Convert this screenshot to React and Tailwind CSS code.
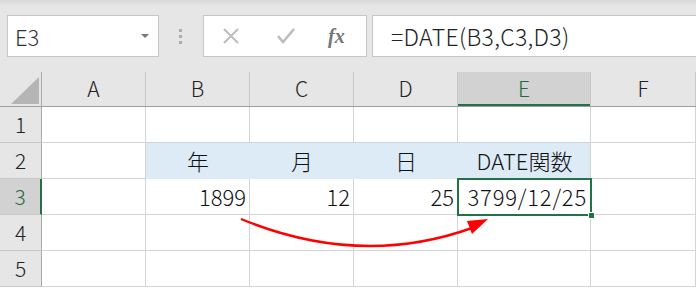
import React from 'react';

const COLS = ['A', 'B', 'C', 'D', 'E', 'F'];
const WIDTHS = ['w-[104px]', 'w-[104px]', 'w-[104px]', 'w-[104px]', 'w-[133px]', 'w-[105px]'];

// row data: [text, align, blue]
const ROWS = {
  1: {},
  2: { B: ['年', 'center', true], C: ['月', 'center', true], D: ['日', 'center', true], E: ['DATE関数', 'center', true] },
  3: { B: ['1899', 'right'], C: ['12', 'right'], D: ['25', 'right'], E: ['3799/12/25', 'right'] },
  4: {},
  5: {},
};

function Toolbar() {
  return (
    <div className="relative h-[72px] bg-[#e6e6e6]">
      <div className="h-[5px] bg-gradient-to-b from-[#d9d9d9] to-[#e4e4e4]" />
      <div className="flex items-start pt-[10px]">
        {/* name box */}
        <div className="ml-[7px] flex h-[42px] w-[152px] items-center justify-between border border-[#c6c6c6] bg-white pl-[7px] pr-[9px]">
          <span className="text-[22px] font-light text-[#333]">E3</span>
          <span className="h-0 w-0 border-x-[4px] border-t-[4px] border-x-transparent border-t-[#777]" />
        </div>
        {/* grip dots */}
        <div className="ml-[20px] flex h-[42px] flex-col justify-center gap-[3px]">
          <span className="h-[3px] w-[3px] bg-[#adadad]" />
          <span className="h-[3px] w-[3px] bg-[#adadad]" />
          <span className="h-[3px] w-[3px] bg-[#adadad]" />
        </div>
        {/* cancel / enter / fx */}
        <div className="ml-[21px] flex h-[42px] w-[164px] items-center border border-[#c6c6c6] bg-white">
          <svg className="ml-[18px]" width="18" height="18" viewBox="0 0 18 18">
            <path d="M2 2 L16 16 M16 2 L2 16" stroke="#bdbdbd" strokeWidth="2" fill="none" />
          </svg>
          <svg className="ml-[36px]" width="20" height="18" viewBox="0 0 20 18">
            <path d="M2 9 L7 15 L18 2" stroke="#bdbdbd" strokeWidth="2.6" fill="none" />
          </svg>
          <span className="ml-[32px] text-[20px] font-bold italic text-[#767676]" style={{ fontFamily: '"Liberation Serif", serif' }}>fx</span>
        </div>
        {/* formula */}
        <div className="ml-[5px] flex h-[42px] flex-1 items-center border-y border-l border-[#c6c6c6] bg-white pl-[18px]">
          <span className="text-[23px] font-light tracking-[0.3px] text-[#222]">=DATE(B3,C3,D3)</span>
        </div>
      </div>
    </div>
  );
}

function Sheet() {
  return (
    <div className="relative">
      {/* column headers */}
      <div className="flex h-[35px] border-b border-[#9e9e9e] bg-[#e6e6e6]">
        <div className="relative w-[42px] border-r border-[#aaaaaa]">
          <svg className="absolute left-[11px] top-[5px]" width="28" height="27" viewBox="0 0 28 27">
            <path d="M28 0 L28 27 L0 27 Z" fill="#b5b5b5" />
          </svg>
        </div>
        {COLS.map((c, i) => (
          <div
            key={c}
            className={`${WIDTHS[i]} flex items-center justify-center border-r text-[21px] font-light ${
              c === 'E'
                ? 'border-[#c8c8c8] bg-[#d2d2d2] text-[#1e6b40] shadow-[inset_0_-2px_0_#217346]'
                : 'border-[#c8c8c8] text-[#222]'
            }`}
          >
            {c}
          </div>
        ))}
      </div>
      {/* rows */}
      {Object.keys(ROWS).map((r) => (
        <div key={r} className="flex h-[36px]">
          <div
            className={`flex w-[42px] items-center justify-center border-b border-r text-[21px] font-light ${
              r === '3'
                ? 'border-b-[#c8c8c8] border-r-[#217346] border-r-2 bg-[#d2d2d2] text-[#1e6b40]'
                : 'border-b-[#c8c8c8] border-r-[#aaaaaa] bg-[#e6e6e6] text-[#222]'
            }`}
          >
            {r}
          </div>
          {COLS.map((c, i) => {
            const cell = ROWS[r][c];
            const blue = cell && cell[2];
            return (
              <div
                key={c}
                className={`${WIDTHS[i]} flex items-center border-b border-r pl-[4px] pr-[3px] text-[22px] font-light text-[#111] ${
                  blue ? 'bg-[#ddebf7] border-b-[#ddebf7]' : 'bg-white border-b-[#d4d4d4]'
                } ${blue && c !== 'E' ? 'border-r-[#ddebf7]' : 'border-r-[#d4d4d4]'} ${
                  cell && cell[1] === 'right' ? 'justify-end' : 'justify-center'
                } ${r === '3' && c === 'E' ? 'tracking-[0.8px]' : ''}`}
              >
                {cell ? cell[0] : ''}
              </div>
            );
          })}
        </div>
      ))}
      {/* active cell E3 */}
      <div className="pointer-events-none absolute left-[457px] top-[106px] h-[38px] w-[135px] border-2 border-[#217346]" />
      <div className="pointer-events-none absolute left-[588px] top-[140px] h-[7px] w-[7px] border border-white bg-[#217346]" />
      {/* arrow */}
      <svg className="pointer-events-none absolute left-0 top-0" width="696" height="216" viewBox="0 72 696 216">
        <path d="M241 219 Q360 268 472 228" stroke="#ff0000" strokeWidth="2.4" fill="none" />
        <path d="M488 219 L467 221 L472 234 Z" fill="#ff0000" />
      </svg>
    </div>
  );
}

export default function App() {
  return (
    <div
      className="h-[288px] w-[696px] overflow-hidden bg-white"
      style={{ fontFamily: '"Noto Sans CJK JP", "Noto Sans", sans-serif' }}
    >
      <Toolbar />
      <Sheet />
    </div>
  );
}
